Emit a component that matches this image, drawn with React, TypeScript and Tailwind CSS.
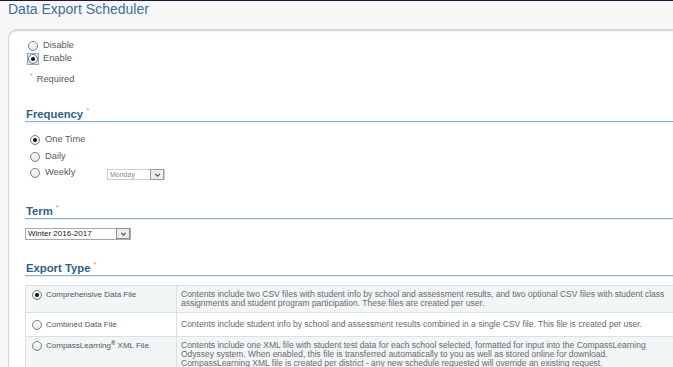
import type { ReactNode } from "react";

function Radio({ checked = false }: { checked?: boolean }) {
  return (
    <span className="flex h-[10px] w-[10px] shrink-0 items-center justify-center rounded-full border border-[#7d7d7d] bg-gradient-to-b from-white to-[#e6e6e6]">
      {checked && <span className="h-[4px] w-[4px] rounded-full bg-[#141414]" />}
    </span>
  );
}

function Heading({ children, className = "" }: { children: ReactNode; className?: string }) {
  return (
    <div className={className}>
      <div className="flex h-[14px] items-end pl-[1px] text-[11.3px] font-bold leading-[13px] text-[#2d5f8b]">
        {children}
        <span className="ml-[3px] self-start text-[8px] font-normal leading-[8px] text-[#f19a3a]">*</span>
      </div>
      <div className="h-px bg-[#8cb1cd]" />
      <div className="h-px bg-[#e8eff5]" />
    </div>
  );
}

function Chevron() {
  return (
    <svg viewBox="0 0 8 5" className="h-[4px] w-[7px]" aria-hidden>
      <path d="M1 1 4 4 7 1" fill="none" stroke="#555" strokeWidth="1.3" />
    </svg>
  );
}

const rows = [
  {
    label: "Comprehensive Data File",
    checked: true,
    shade: true,
    cls: "h-[26px] pt-[4px]",
    text: [
      "Contents include two CSV files with student info by school and assessment results, and two optional CSV files with student class",
      "assignments and student program participation. These files are created per user.",
    ],
  },
  {
    label: "Combined Data File",
    checked: false,
    shade: false,
    cls: "h-[23px] pt-[7px]",
    text: [
      "Contents include student info by school and assessment results combined in a single CSV file. This file is created per user.",
    ],
  },
  {
    label: "xml",
    checked: false,
    shade: true,
    cls: "h-[40px] pt-[4px]",
    text: [
      "Contents include one XML file with student test data for each school selected, formatted for input into the CompassLearning",
      "Odyssey system. When enabled, this file is transferred automatically to you as well as stored online for download.",
      "CompassLearning XML file is created per district - any new schedule requested will override an existing request.",
    ],
  },
];

export default function App() {
  return (
    <div className="h-[367px] w-[673px] overflow-hidden bg-[#f7f7f7] font-['Liberation_Sans',Arial,sans-serif]">
      <div className="h-px bg-[#1c1a3c]" />
      <header className="h-[28px] pl-2 text-[14px] leading-[16px] text-[#3a70a1]">
        Data Export Scheduler
      </header>

      <div className="pl-2">
        <div className="h-[340px] overflow-hidden rounded-tl-[9px] border-l border-t-2 border-[#d6d6d6] bg-white pl-[16px] shadow-[inset_0_1px_2px_rgba(0,0,0,0.06)]">
          {/* enable / disable */}
          <div className="pt-[8px] text-[9.3px] text-[#5a5a5a]">
            <div className="flex h-[13px] items-center gap-[5px] pl-[3px]">
              <Radio />
              <span>Disable</span>
            </div>
            <div className="flex h-[13px] items-center gap-[4px] pl-[2px]">
              <span className="flex h-[12px] w-[12px] items-center justify-center border border-[#86abc8] bg-[#d9e9f6]">
                <Radio checked />
              </span>
              <span>Enable</span>
            </div>
            <div className="mt-[9px] flex h-[12px] items-center pl-[5px]">
              <span className="-mt-[10px] text-[7px] leading-[7px] text-[#f19a3a]">*</span>
              <span className="ml-[4px]">Required</span>
            </div>
          </div>

          <Heading className="mt-[21px]">Frequency</Heading>

          <div className="mt-[9px] pl-[5px] text-[9.3px] text-[#5a5a5a]">
            <div className="flex h-[16.5px] items-center gap-[5px]">
              <Radio checked />
              <span>One Time</span>
            </div>
            <div className="flex h-[16.5px] items-center gap-[5px]">
              <Radio />
              <span>Daily</span>
            </div>
            <div className="flex h-[16.5px] items-center gap-[5px]">
              <Radio />
              <span className="w-[57px]">Weekly</span>
              <div className="mt-[3px] flex h-[11px] w-[58px] items-center justify-between border border-[#d0d0d0] bg-white pl-[2px] text-[7px] text-[#8a8a8a]">
                <span>Monday</span>
                <span className="flex h-[11px] w-[14px] items-center justify-center border border-[#9a9a9a] bg-[#eeeeee]">
                  <Chevron />
                </span>
              </div>
            </div>
          </div>

          <Heading className="mt-[22px]">Term</Heading>

          <div className="mt-[8px] flex h-[12px] w-[106px] items-center justify-between border border-[#a8a8a8] bg-white pl-[2px] text-[8px] text-[#222]">
            <span>Winter 2016-2017</span>
            <span className="flex h-[11px] w-[14px] items-center justify-center border border-[#8f8f8f] bg-[#ececec]">
              <Chevron />
            </span>
          </div>

          <Heading className="mt-[21px]">Export Type</Heading>

          <div className="mt-[8px] w-[700px] border-t border-l border-[#d9e1e4] text-[8px] leading-[9px]">
            {rows.map((r) => (
              <div
                key={r.label}
                className={`flex border-b border-[#d9e1e4] ${r.shade ? "bg-[#f2f6f7]" : "bg-white"}`}
              >
                <div className={`flex w-[151px] shrink-0 items-start gap-[4px] border-r border-[#d9e1e4] pl-[6px] text-[#555] ${r.cls}`}>
                  <Radio checked={r.checked} />
                  {r.label === "xml" ? (
                    <span>
                      CompassLearning<sup className="text-[6px] font-bold">®</sup> XML File
                    </span>
                  ) : (
                    <span>{r.label}</span>
                  )}
                </div>
                <div className={`whitespace-nowrap pl-[4px] text-[8.5px] text-[#6a6a6a] ${r.cls}`}>
                  {r.text.map((t) => (
                    <div key={t}>{t}</div>
                  ))}
                </div>
              </div>
            ))}
          </div>
        </div>
      </div>
    </div>
  );
}
